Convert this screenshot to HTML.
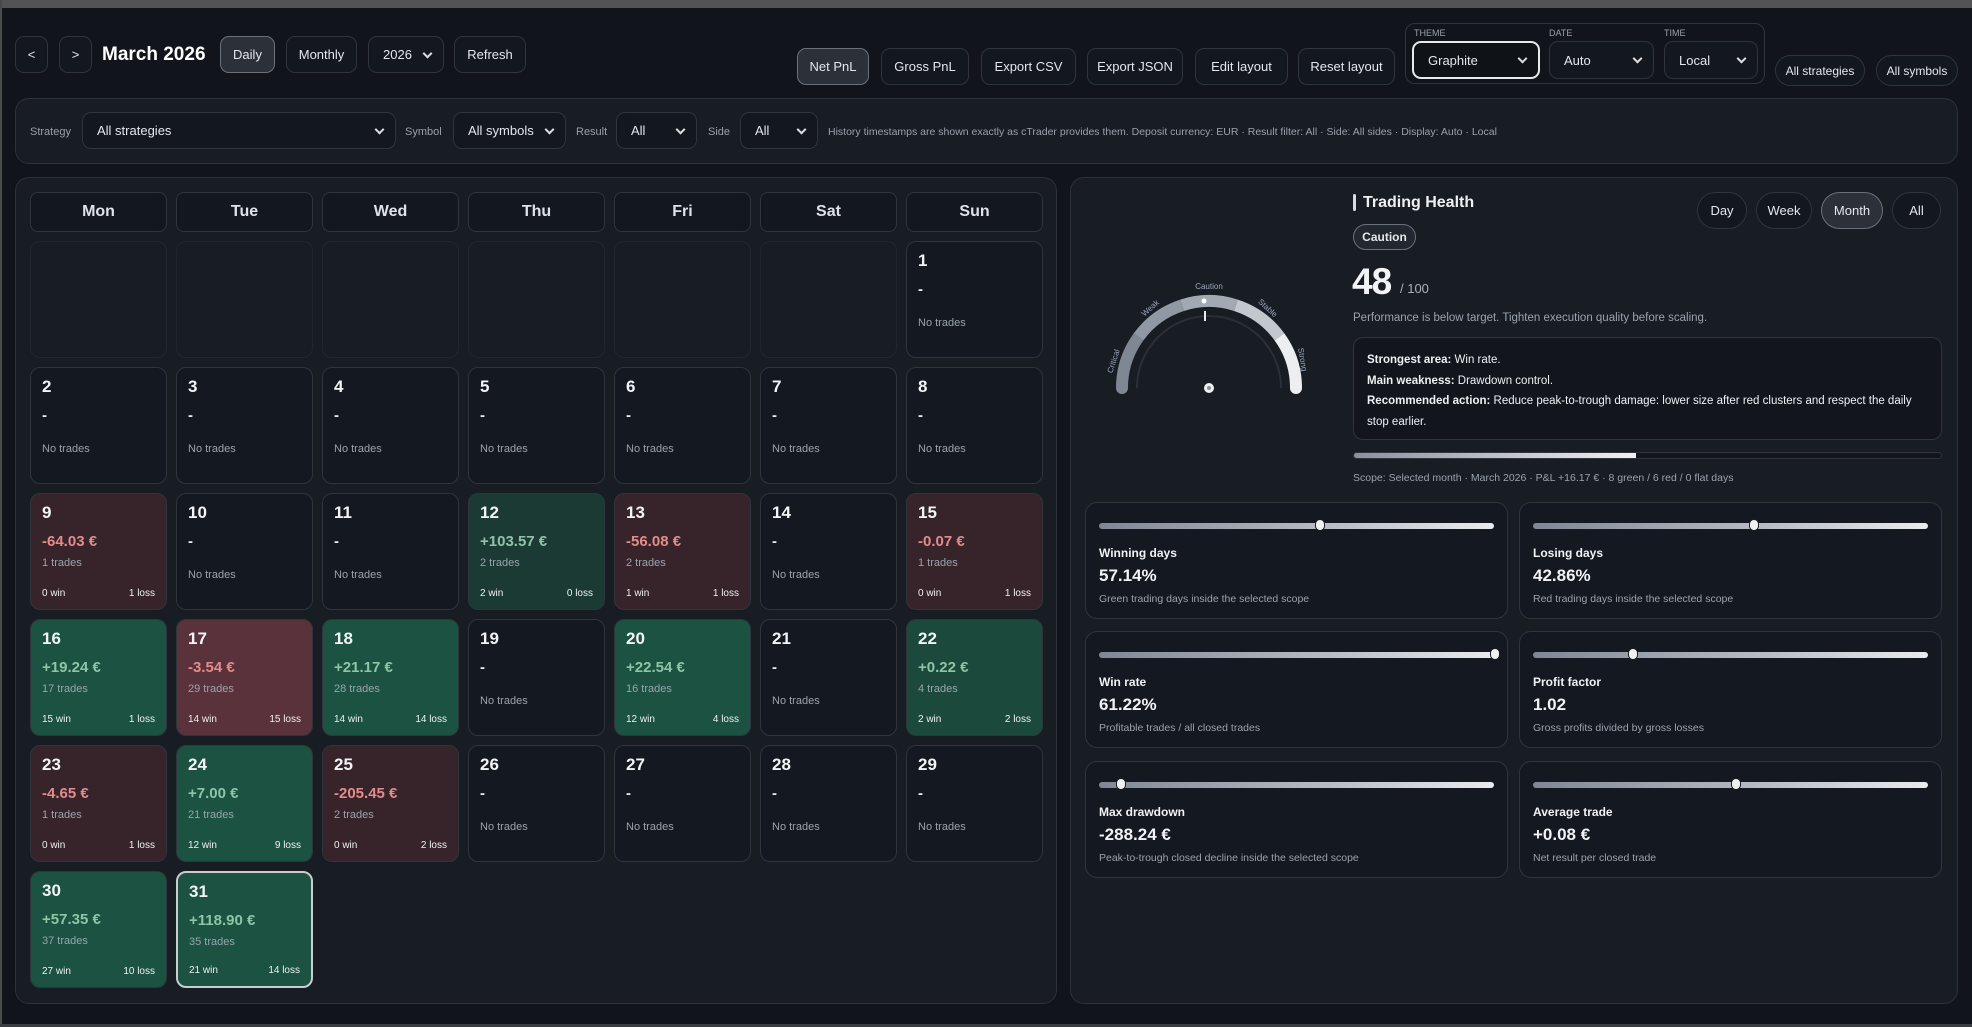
<!DOCTYPE html>
<html><head><meta charset="utf-8"><style>
*{box-sizing:border-box;margin:0;padding:0}
body{width:1972px;height:1027px;background:#11141a;font-family:"Liberation Sans",sans-serif;color:#e8ebef;position:relative;overflow:hidden}
.a{position:absolute}
.btn{position:absolute;border:1px solid #2f343d;background:#13171e;border-radius:9px;color:#e4e7eb;font-size:13px;display:flex;align-items:center;justify-content:center}
.btn.on{background:#2b3039;border-color:#6b717b}
.sel{position:absolute;border:1px solid #2f343d;background:#13171e;border-radius:9px;color:#e4e7eb;font-size:13px;display:flex;align-items:center;padding-left:14px}
.sel:after{content:"";position:absolute;right:12px;top:50%;width:5px;height:5px;border-right:2px solid #ddd;border-bottom:2px solid #ddd;transform:translateY(-70%) rotate(45deg)}
.lbl{position:absolute;font-size:11px;color:#9aa1ab}
.panel{position:absolute;border:1px solid #2c313a;background:#181c23;border-radius:14px}
.hd{position:absolute;width:137px;height:40px;border:1px solid #2f343d;background:#13171e;border-radius:8px;font-weight:bold;font-size:16px;display:flex;align-items:center;justify-content:center;color:#dfe3e8}
.c{position:absolute;width:137px;height:117px;border:1px solid #2f343d;background:#141820;border-radius:10px}
.c.e{background:#181c23;border-color:#22262e}
.c.g{background:#1b5241}
.c.gd{background:#1b3a33}
.c.r{background:#5a323b}
.c.rd{background:#37242b}
.c .n{position:absolute;left:11px;top:9px;font-size:17px;font-weight:bold;color:#f2f4f6}
.c .v{position:absolute;left:11px;top:39px;font-size:15px;font-weight:bold}
.c .v.p{color:#8fc4a6}.c .v.m{color:#e48b8b}.c .v.d{color:#e8ebef}
.c .t{position:absolute;left:11px;top:63px;font-size:11px;color:#9aa3ad}
.c .nt{position:absolute;left:11px;top:75px;font-size:11px;color:#9aa3ad}
.c .w{position:absolute;left:11px;bottom:10px;font-size:10px;color:#eef0f2}
.c .l{position:absolute;right:11px;bottom:10px;font-size:10px;color:#eef0f2}
.pill{position:absolute;border:1px solid #2f343d;background:#13171e;border-radius:20px;font-size:13px;display:flex;align-items:center;justify-content:center;color:#e4e7eb}
.pill.on{background:#2b3039;border-color:#6b717b}
.mc{position:absolute;width:423px;height:117px;border:1px solid #2f343d;background:#141820;border-radius:12px}
.mc .bar{position:absolute;left:13px;right:13px;top:20px;height:6px;border-radius:3px;background:linear-gradient(90deg,#7f8794,#b9bec6 60%,#e9ebee)}
.mc .k{position:absolute;top:16px;width:10px;height:12px;border-radius:5px;background:#eef0f2;border:1px solid #1a1d23}
.mc .ml{position:absolute;left:13px;top:43px;font-size:12px;font-weight:bold;color:#f0f2f4}
.mc .mv{position:absolute;left:13px;top:63px;font-size:17px;font-weight:bold;color:#f0f2f4}
.mc .md{position:absolute;left:13px;top:90px;font-size:10.5px;color:#9aa3ad}
</style></head><body>
<div class="a" style="left:0;top:0;width:1972px;height:8px;background:#535353"></div>
<div class="a" style="left:0;top:0;width:2px;height:1027px;background:#4a4a4a"></div>
<div class="a" style="left:0;top:1024px;width:1972px;height:3px;background:#3a3d42"></div>

<div class="btn" style="left:15px;top:36px;width:33px;height:37px">&lt;</div>
<div class="btn" style="left:59px;top:36px;width:33px;height:37px">&gt;</div>
<div class="a" style="left:102px;top:44px;font-size:19px;font-weight:bold;color:#fff">March 2026</div>
<div class="btn on" style="left:220px;top:36px;width:55px;height:37px">Daily</div>
<div class="btn" style="left:286px;top:36px;width:71px;height:37px">Monthly</div>
<div class="sel" style="left:368px;top:36px;width:76px;height:37px">2026</div>
<div class="btn" style="left:454px;top:36px;width:72px;height:37px">Refresh</div>

<div class="btn on" style="left:797px;top:48px;width:72px;height:37px">Net PnL</div>
<div class="btn" style="left:881px;top:48px;width:88px;height:37px">Gross PnL</div>
<div class="btn" style="left:981px;top:48px;width:95px;height:37px">Export CSV</div>
<div class="btn" style="left:1087px;top:48px;width:96px;height:37px">Export JSON</div>
<div class="btn" style="left:1195px;top:48px;width:93px;height:37px">Edit layout</div>
<div class="btn" style="left:1298px;top:48px;width:97px;height:37px">Reset layout</div>
<div class="a" style="left:1405px;top:23px;width:360px;height:61px;border:1px solid #2f343d;border-radius:10px"></div>
<div class="lbl" style="left:1414px;top:28px;font-size:9px">THEME</div>
<div class="lbl" style="left:1549px;top:28px;font-size:9px">DATE</div>
<div class="lbl" style="left:1664px;top:28px;font-size:9px">TIME</div>
<div class="sel" style="left:1412px;top:41px;width:128px;height:38px;border:2px solid #e8eaed;background:#0f1217">Graphite</div>
<div class="sel" style="left:1549px;top:41px;width:105px;height:38px">Auto</div>
<div class="sel" style="left:1664px;top:41px;width:94px;height:38px">Local</div>
<div class="pill" style="left:1775px;top:55px;width:90px;height:31px;font-size:12px">All strategies</div>
<div class="pill" style="left:1876px;top:55px;width:82px;height:31px;font-size:12px">All symbols</div>

<div class="panel" style="left:15px;top:98px;width:1943px;height:66px"></div>
<div class="lbl" style="left:30px;top:126px">Strategy</div>
<div class="sel" style="left:82px;top:112px;width:314px;height:37px">All strategies</div>
<div class="lbl" style="left:405px;top:126px">Symbol</div>
<div class="sel" style="left:453px;top:112px;width:113px;height:37px">All symbols</div>
<div class="lbl" style="left:576px;top:126px">Result</div>
<div class="sel" style="left:616px;top:112px;width:81px;height:37px">All</div>
<div class="lbl" style="left:708px;top:126px">Side</div>
<div class="sel" style="left:740px;top:112px;width:78px;height:37px">All</div>
<div class="lbl" style="left:828px;top:126px;font-size:10.5px">History timestamps are shown exactly as cTrader provides them. Deposit currency: EUR · Result filter: All · Side: All sides · Display: Auto · Local</div>

<div class="panel" style="left:15px;top:177px;width:1042px;height:827px"></div>
<div class="hd" style="left:30px;top:192px">Mon</div>
<div class="hd" style="left:176px;top:192px">Tue</div>
<div class="hd" style="left:322px;top:192px">Wed</div>
<div class="hd" style="left:468px;top:192px">Thu</div>
<div class="hd" style="left:614px;top:192px">Fri</div>
<div class="hd" style="left:760px;top:192px">Sat</div>
<div class="hd" style="left:906px;top:192px">Sun</div>

<div class="c e" style="left:30px;top:241px"></div>
<div class="c e" style="left:176px;top:241px"></div>
<div class="c e" style="left:322px;top:241px"></div>
<div class="c e" style="left:468px;top:241px"></div>
<div class="c e" style="left:614px;top:241px"></div>
<div class="c e" style="left:760px;top:241px"></div>
<div class="c" style="left:906px;top:241px"><div class="n">1</div><div class="v d">-</div><div class="nt">No trades</div></div>

<div class="c" style="left:30px;top:367px"><div class="n">2</div><div class="v d">-</div><div class="nt">No trades</div></div>
<div class="c" style="left:176px;top:367px"><div class="n">3</div><div class="v d">-</div><div class="nt">No trades</div></div>
<div class="c" style="left:322px;top:367px"><div class="n">4</div><div class="v d">-</div><div class="nt">No trades</div></div>
<div class="c" style="left:468px;top:367px"><div class="n">5</div><div class="v d">-</div><div class="nt">No trades</div></div>
<div class="c" style="left:614px;top:367px"><div class="n">6</div><div class="v d">-</div><div class="nt">No trades</div></div>
<div class="c" style="left:760px;top:367px"><div class="n">7</div><div class="v d">-</div><div class="nt">No trades</div></div>
<div class="c" style="left:906px;top:367px"><div class="n">8</div><div class="v d">-</div><div class="nt">No trades</div></div>

<div class="c rd" style="left:30px;top:493px"><div class="n">9</div><div class="v m">-64.03 €</div><div class="t">1 trades</div><div class="w">0 win</div><div class="l">1 loss</div></div>
<div class="c" style="left:176px;top:493px"><div class="n">10</div><div class="v d">-</div><div class="nt">No trades</div></div>
<div class="c" style="left:322px;top:493px"><div class="n">11</div><div class="v d">-</div><div class="nt">No trades</div></div>
<div class="c gd" style="left:468px;top:493px"><div class="n">12</div><div class="v p">+103.57 €</div><div class="t">2 trades</div><div class="w">2 win</div><div class="l">0 loss</div></div>
<div class="c rd" style="left:614px;top:493px"><div class="n">13</div><div class="v m">-56.08 €</div><div class="t">2 trades</div><div class="w">1 win</div><div class="l">1 loss</div></div>
<div class="c" style="left:760px;top:493px"><div class="n">14</div><div class="v d">-</div><div class="nt">No trades</div></div>
<div class="c rd" style="left:906px;top:493px"><div class="n">15</div><div class="v m">-0.07 €</div><div class="t">1 trades</div><div class="w">0 win</div><div class="l">1 loss</div></div>

<div class="c g" style="left:30px;top:619px"><div class="n">16</div><div class="v p">+19.24 €</div><div class="t">17 trades</div><div class="w">15 win</div><div class="l">1 loss</div></div>
<div class="c r" style="left:176px;top:619px"><div class="n">17</div><div class="v m">-3.54 €</div><div class="t">29 trades</div><div class="w">14 win</div><div class="l">15 loss</div></div>
<div class="c g" style="left:322px;top:619px"><div class="n">18</div><div class="v p">+21.17 €</div><div class="t">28 trades</div><div class="w">14 win</div><div class="l">14 loss</div></div>
<div class="c" style="left:468px;top:619px"><div class="n">19</div><div class="v d">-</div><div class="nt">No trades</div></div>
<div class="c g" style="left:614px;top:619px"><div class="n">20</div><div class="v p">+22.54 €</div><div class="t">16 trades</div><div class="w">12 win</div><div class="l">4 loss</div></div>
<div class="c" style="left:760px;top:619px"><div class="n">21</div><div class="v d">-</div><div class="nt">No trades</div></div>
<div class="c g" style="left:906px;top:619px;background:#1b4a3c"><div class="n">22</div><div class="v p">+0.22 €</div><div class="t">4 trades</div><div class="w">2 win</div><div class="l">2 loss</div></div>

<div class="c rd" style="left:30px;top:745px"><div class="n">23</div><div class="v m">-4.65 €</div><div class="t">1 trades</div><div class="w">0 win</div><div class="l">1 loss</div></div>
<div class="c g" style="left:176px;top:745px"><div class="n">24</div><div class="v p">+7.00 €</div><div class="t">21 trades</div><div class="w">12 win</div><div class="l">9 loss</div></div>
<div class="c rd" style="left:322px;top:745px"><div class="n">25</div><div class="v m">-205.45 €</div><div class="t">2 trades</div><div class="w">0 win</div><div class="l">2 loss</div></div>
<div class="c" style="left:468px;top:745px"><div class="n">26</div><div class="v d">-</div><div class="nt">No trades</div></div>
<div class="c" style="left:614px;top:745px"><div class="n">27</div><div class="v d">-</div><div class="nt">No trades</div></div>
<div class="c" style="left:760px;top:745px"><div class="n">28</div><div class="v d">-</div><div class="nt">No trades</div></div>
<div class="c" style="left:906px;top:745px"><div class="n">29</div><div class="v d">-</div><div class="nt">No trades</div></div>

<div class="c g" style="left:30px;top:871px"><div class="n">30</div><div class="v p">+57.35 €</div><div class="t">37 trades</div><div class="w">27 win</div><div class="l">10 loss</div></div>
<div class="c g" style="left:176px;top:871px;border:2px solid #c9ccd1"><div class="n">31</div><div class="v p">+118.90 €</div><div class="t">35 trades</div><div class="w">21 win</div><div class="l">14 loss</div></div>

<div class="panel" style="left:1070px;top:177px;width:888px;height:827px"></div>
<svg class="a" style="left:1090px;top:260px" width="250" height="150" viewBox="0 0 250 150">
<path d="M47 128 A72 72 0 0 1 191 128" fill="none" stroke="#2a2f39" stroke-width="2"/>
<g fill="none" stroke-width="12">
<path d="M32 128 A87 87 0 0 1 48.6 76.8" stroke="#7f8794"/>
<path d="M48.6 76.8 A87 87 0 0 1 92.1 45.3" stroke="#9098a4"/>
<path d="M92.1 45.3 A87 87 0 0 1 145.9 45.3" stroke="#a3a9b3"/>
<path d="M145.9 45.3 A87 87 0 0 1 189.4 76.8" stroke="#c3c7ce"/>
<path d="M189.4 76.8 A87 87 0 0 1 206 128" stroke="#eceef1"/>
</g>
<circle cx="32" cy="128" r="6" fill="#7f8794"/><circle cx="206" cy="128" r="6" fill="#eceef1"/>
<circle cx="114" cy="41" r="2.5" fill="#fff"/>
<line x1="115" y1="51" x2="115" y2="61" stroke="#e8eaed" stroke-width="2"/>
<circle cx="119" cy="128" r="5" fill="#eef0f2"/><circle cx="119" cy="128" r="2" fill="#8a909a"/>
<g font-family="Liberation Sans,sans-serif" font-size="8" fill="#9aa6bf">
<text x="119" y="29" text-anchor="middle">Caution</text>
<text x="62" y="50" transform="rotate(-42 62 50)" text-anchor="middle">Weak</text>
<text x="26" y="102" transform="rotate(-72 26 102)" text-anchor="middle">Critical</text>
<text x="176" y="50" transform="rotate(42 176 50)" text-anchor="middle">Stable</text>
<text x="210" y="100" transform="rotate(80 210 100)" text-anchor="middle">Strong</text>
</g>
</svg>
<div class="a" style="left:1353px;top:194px;width:3px;height:17px;background:#d8dbe0;border-radius:2px"></div>
<div class="a" style="left:1363px;top:194px;font-size:16px;font-weight:bold;color:#eef0f2">Trading Health</div>
<div class="pill" style="left:1697px;top:192px;width:50px;height:37px">Day</div>
<div class="pill" style="left:1756px;top:192px;width:56px;height:37px">Week</div>
<div class="pill on" style="left:1821px;top:192px;width:62px;height:37px">Month</div>
<div class="pill" style="left:1892px;top:192px;width:49px;height:37px">All</div>
<div class="pill on" style="left:1353px;top:224px;width:63px;height:26px;font-size:12px;font-weight:bold;background:#23272f">Caution</div>
<div class="a" style="left:1352px;top:261px;font-size:37px;font-weight:bold;color:#f2f4f6;letter-spacing:-1px">48</div>
<div class="a" style="left:1400px;top:281px;font-size:13px;color:#aab0b9">/ 100</div>
<div class="a" style="left:1353px;top:312px;font-size:11.5px;color:#9aa3ad">Performance is below target. Tighten execution quality before scaling.</div>
<div class="a" style="left:1353px;top:337px;width:589px;height:103px;border:1px solid #2f343d;background:#12161c;border-radius:10px;padding:12px 13px;font-size:11.5px;line-height:20.5px;color:#eef0f2">
<b>Strongest area:</b> Win rate.<br><b>Main weakness:</b> Drawdown control.<br><b>Recommended action:</b> Reduce peak-to-trough damage: lower size after red clusters and respect the daily stop earlier.</div>
<div class="a" style="left:1353px;top:452px;width:589px;height:7px;border:1px solid #2f343d;border-radius:4px;background:#12161c;overflow:hidden"><div style="width:48%;height:100%;background:linear-gradient(90deg,#8a919c,#f0f1f3)"></div></div>
<div class="a" style="left:1353px;top:472px;font-size:10.5px;color:#9aa3ad">Scope: Selected month · March 2026 · P&amp;L +16.17 € · 8 green / 6 red / 0 flat days</div>

<div class="mc" style="left:1085px;top:502px"><div class="bar"></div><div class="k" style="left:229px"></div><div class="ml">Winning days</div><div class="mv">57.14%</div><div class="md">Green trading days inside the selected scope</div></div>
<div class="mc" style="left:1519px;top:502px"><div class="bar"></div><div class="k" style="left:229px"></div><div class="ml">Losing days</div><div class="mv">42.86%</div><div class="md">Red trading days inside the selected scope</div></div>
<div class="mc" style="left:1085px;top:631px"><div class="bar"></div><div class="k" style="left:404px"></div><div class="ml">Win rate</div><div class="mv">61.22%</div><div class="md">Profitable trades / all closed trades</div></div>
<div class="mc" style="left:1519px;top:631px"><div class="bar"></div><div class="k" style="left:108px"></div><div class="ml">Profit factor</div><div class="mv">1.02</div><div class="md">Gross profits divided by gross losses</div></div>
<div class="mc" style="left:1085px;top:761px"><div class="bar"></div><div class="k" style="left:30px"></div><div class="ml">Max drawdown</div><div class="mv">-288.24 €</div><div class="md">Peak-to-trough closed decline inside the selected scope</div></div>
<div class="mc" style="left:1519px;top:761px"><div class="bar"></div><div class="k" style="left:211px"></div><div class="ml">Average trade</div><div class="mv">+0.08 €</div><div class="md">Net result per closed trade</div></div>
</body></html>
